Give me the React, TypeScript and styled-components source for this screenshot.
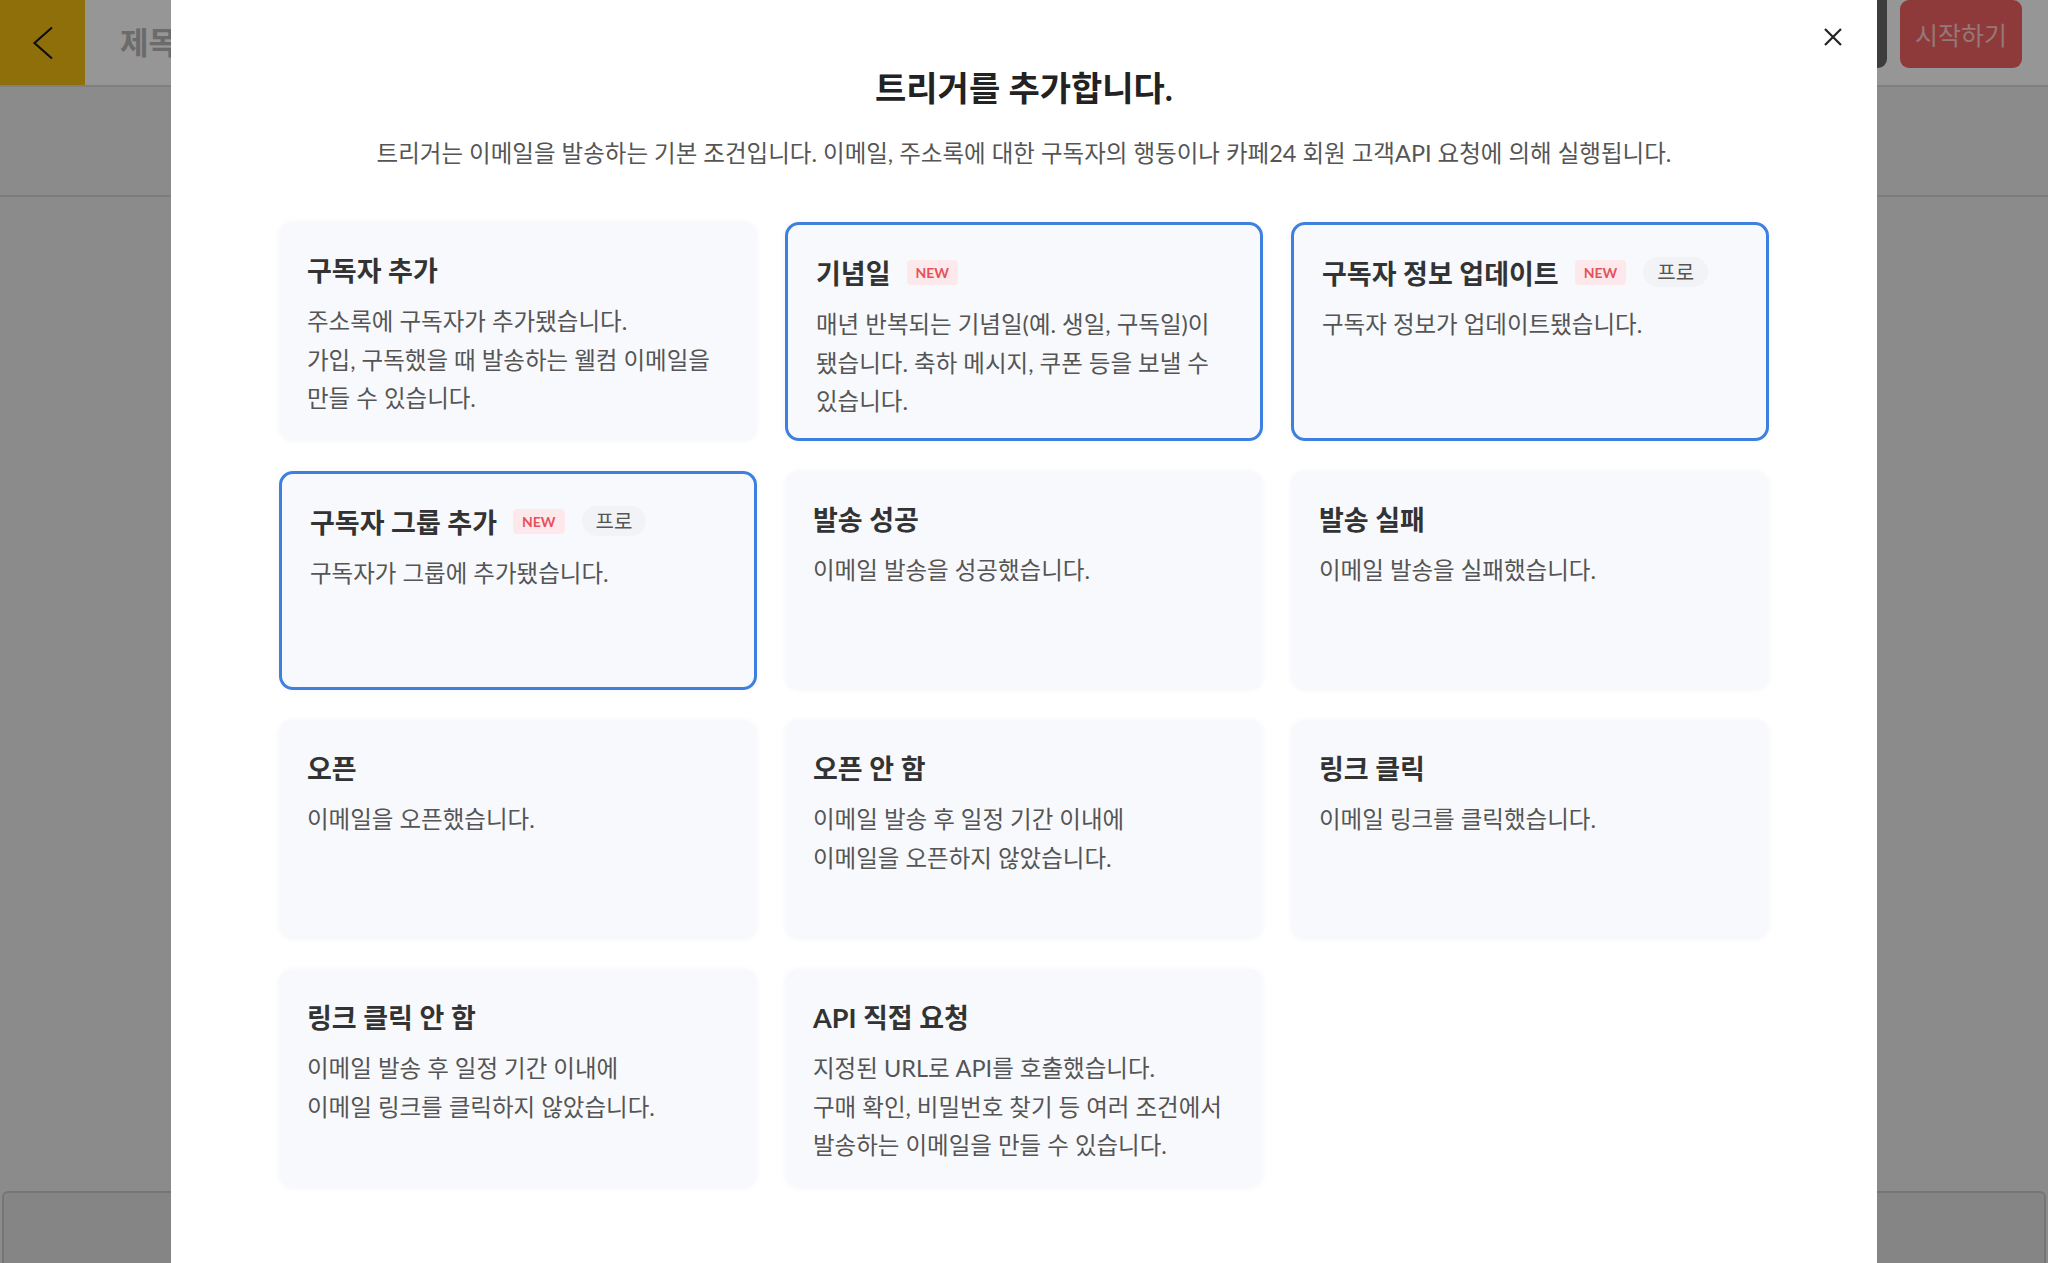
import React from 'react';
import styled, {createGlobalStyle, css} from "styled-components";

type Trigger = {
    title: string;
    lines: string[];
    isNew?: boolean;
    pro?: boolean;
    selected?: boolean;
}

const triggers: Trigger[] = [
    {title: "구독자 추가", lines: ["주소록에 구독자가 추가됐습니다.", "가입, 구독했을 때 발송하는 웰컴 이메일을", "만들 수 있습니다."]},
    {title: "기념일", isNew: true, selected: true, lines: ["매년 반복되는 기념일(예. 생일, 구독일)이", "됐습니다. 축하 메시지, 쿠폰 등을 보낼 수", "있습니다."]},
    {title: "구독자 정보 업데이트", isNew: true, pro: true, selected: true, lines: ["구독자 정보가 업데이트됐습니다."]},
    {title: "구독자 그룹 추가", isNew: true, pro: true, selected: true, lines: ["구독자가 그룹에 추가됐습니다."]},
    {title: "발송 성공", lines: ["이메일 발송을 성공했습니다."]},
    {title: "발송 실패", lines: ["이메일 발송을 실패했습니다."]},
    {title: "오픈", lines: ["이메일을 오픈했습니다."]},
    {title: "오픈 안 함", lines: ["이메일 발송 후 일정 기간 이내에", "이메일을 오픈하지 않았습니다."]},
    {title: "링크 클릭", lines: ["이메일 링크를 클릭했습니다."]},
    {title: "링크 클릭 안 함", lines: ["이메일 발송 후 일정 기간 이내에", "이메일 링크를 클릭하지 않았습니다."]},
    {title: "API 직접 요청", lines: ["지정된 URL로 API를 호출했습니다.", "구매 확인, 비밀번호 찾기 등 여러 조건에서", "발송하는 이메일을 만들 수 있습니다."]},
];

export default function App() {
    return (
        <>
            <GlobalStyle/>
            <Page>
                <Header>
                    <BackButton>
                        <svg width="22" height="34" viewBox="0 0 22 34" fill="none">
                            <path d="M20 1.5 L2.5 17 L20 32.5" stroke="#1a1a1a" strokeWidth="2.2"/>
                        </svg>
                    </BackButton>
                    <DocTitle>제목 없음</DocTitle>
                    <HeaderActions>
                        <DarkButton>미리보기</DarkButton>
                        <StartButton>시작하기</StartButton>
                    </HeaderActions>
                </Header>
                <Toolbar/>
                <Workspace/>
                <BottomPanel/>
            </Page>

            <Overlay>
                <Modal>
                    <CloseButton aria-label="닫기">
                        <svg width="20" height="20" viewBox="0 0 20 20">
                            <path d="M2 2 L18 18 M18 2 L2 18" stroke="#222" strokeWidth="2.2"/>
                        </svg>
                    </CloseButton>
                    <ModalTitle>트리거를 추가합니다.</ModalTitle>
                    <ModalDesc>
                        트리거는 이메일을 발송하는 기본 조건입니다. 이메일, 주소록에 대한 구독자의 행동이나 카페24 회원 고객API 요청에 의해 실행됩니다.
                    </ModalDesc>
                    <TriggerGrid>
                        {triggers.map(t => (
                            <TriggerCard key={t.title} $selected={t.selected}>
                                <CardHead>
                                    <CardTitle>{t.title}</CardTitle>
                                    {t.isNew && <NewBadge>NEW</NewBadge>}
                                    {t.pro && <ProBadge>프로</ProBadge>}
                                </CardHead>
                                <CardText>
                                    {t.lines.map(l => <span key={l}>{l}</span>)}
                                </CardText>
                            </TriggerCard>
                        ))}
                    </TriggerGrid>
                </Modal>
            </Overlay>
        </>
    );
}

const GlobalStyle = createGlobalStyle`
    * {
        box-sizing: border-box;
    }
    body {
        margin: 0;
        font-family: Lato, "Noto Sans CJK KR", "Noto Sans", sans-serif;
        overflow: hidden;
    }
`

const Page = styled.div`
    display: flex;
    flex-direction: column;
    height: 100vh;
    background: #e8e8e8;
`

const Header = styled.header`
    display: flex;
    align-items: flex-start;
    height: 87px;
    background: #fafafa;
    border-bottom: 2px solid #d6d6d6;
`

const BackButton = styled.button`
    display: flex;
    align-items: center;
    justify-content: center;
    width: 85px;
    height: 85px;
    border: none;
    background: #eeb911;
`

const DocTitle = styled.div`
    margin: 18px 0 0 35px;
    font-size: 31px;
    font-weight: 700;
    color: #b2b2b2;
`

const HeaderActions = styled.div`
    display: flex;
    gap: 13px;
    margin-left: auto;
    padding-right: 26px;
`

const buttonBase = css`
    height: 68px;
    padding: 0 26px;
    border: none;
    border-radius: 0 0 9px 9px;
    font-family: inherit;
    font-size: 25px;
`

const DarkButton = styled.button`
    ${buttonBase};
    background: #666;
    color: #ddd;
`

const StartButton = styled.button`
    ${buttonBase};
    width: 122px;
    padding: 0;
    border-radius: 9px;
    background: #ee6161;
    color: #f8c8c8;
`

const Toolbar = styled.div`
    height: 110px;
    border-bottom: 2px solid #cfcfcf;
`

const Workspace = styled.div`
    flex: 1;
`

const BottomPanel = styled.div`
    height: 72px;
    margin: 0 2px;
    border: 2px solid #c4c4c4;
    border-bottom: none;
    border-radius: 6px 6px 0 0;
    background: #dedede;
`

const Overlay = styled.div`
    position: fixed;
    inset: 0;
    display: flex;
    justify-content: center;
    background: rgba(0, 0, 0, 0.4);
`

const Modal = styled.div`
    position: relative;
    display: flex;
    flex-direction: column;
    align-items: center;
    width: 1706px;
    height: 100%;
    padding: 66px 108px 0;
    background: #fff;
    overflow: hidden;
`

const CloseButton = styled.button`
    position: absolute;
    top: 27px;
    right: 34px;
    display: flex;
    padding: 0;
    border: none;
    background: none;
`

const ModalTitle = styled.h2`
    margin: 0;
    font-size: 34px;
    line-height: 44px;
    font-weight: 700;
    color: #222;
`

const ModalDesc = styled.p`
    margin: 27px 0 0;
    font-size: 23.5px;
    line-height: 32px;
    color: #555;
`

const TriggerGrid = styled.div`
    display: grid;
    width: 100%;
    margin-top: 53px;
    grid-template-columns: repeat(3, 1fr);
    grid-auto-rows: 219px;
    column-gap: 28px;
    row-gap: 30px;
`

const TriggerCard = styled.div<{ $selected?: boolean }>`
    padding: 28px 28px;
    border-radius: 14px;
    background: #f8f9fc;
    box-shadow: 0 0 6px rgba(20, 30, 60, 0.04);
    border: ${p => p.$selected ? "3px solid #3d80e0" : "none"};
`

const CardHead = styled.div`
    display: flex;
    align-items: center;
    height: 38px;
    margin-bottom: 14px;
`

const CardTitle = styled.h3`
    margin: 0;
    font-size: 27px;
    font-weight: 700;
    color: #333;
`

const NewBadge = styled.span`
    margin-left: 16px;
    padding: 0 9px;
    height: 25px;
    line-height: 25px;
    border-radius: 4px;
    background: #fde9eb;
    color: #e8505b;
    font-size: 14px;
    font-weight: 700;
`

const ProBadge = styled.span`
    margin-left: 17px;
    padding: 2px 14px;
    border-radius: 16px;
    background: #f2f3f6;
    color: #555;
    font-size: 20px;
    line-height: 26px;
`

const CardText = styled.p`
    display: flex;
    flex-direction: column;
    margin: 0;
    font-size: 23.5px;
    line-height: 38.5px;
    color: #555;
`
